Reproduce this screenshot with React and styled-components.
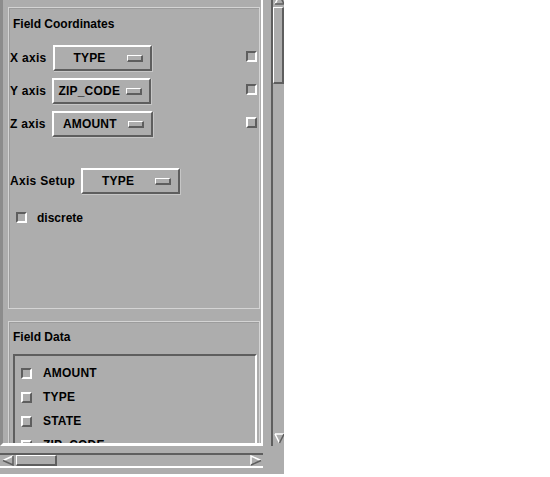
import React from "react";
import styled, { createGlobalStyle } from "styled-components";

const face = "#adadad";
const light = "#ffffff";
const dark = "#5e5e5e";

const GlobalStyle = createGlobalStyle`
  html, body {
    margin: 0;
    background: #fff;
  }
`;

const Window = styled.div`
  width: 284px;
  height: 474px;
  background: ${face};
  display: grid;
  grid-template-columns: 263px 8px 13px;
  grid-template-rows: 446px 28px;
  font: bold 12px "Liberation Sans", Arial, sans-serif;
  color: #000;
`;

const Clip = styled.div`
  grid-column: 1;
  grid-row: 1;
  overflow: hidden;
  box-sizing: border-box;
  border-left: 3px solid #8c8c8c;
  border-right: 2px solid ${light};
  border-bottom: 3px solid ${light};
  padding: 7px 1px 0 5px;
`;

const Frame = styled.div`
  box-sizing: border-box;
  height: ${p => p.$height || "auto"};
  border: 1px solid #d4d4d4;
  box-shadow: inset 1px 1px 0 #9c9c9c;
  padding-top: ${p => p.$padTop || 8}px;
  margin-bottom: 12px;
  display: flex;
  flex-direction: column;
`;

const Title = styled.div`
  line-height: 14px;
  padding-left: 4px;
  margin-top: 1px;
`;

const Rows = styled.div`
  display: flex;
  flex-direction: column;
  gap: 7px;
  margin-top: ${p => p.$top}px;
  padding: 0 2px 0 1px;
`;

const Row = styled.div`
  display: flex;
  align-items: center;
  height: 26px;
`;

const Label = styled.span`
  margin-right: 6px;
  letter-spacing: 0.3px;
  white-space: nowrap;
`;

const Spacer = styled.div`
  flex: 1;
`;

const OptionButton = styled.div`
  box-sizing: border-box;
  width: ${p => p.$width || 99}px;
  height: 26px;
  border: 2px solid;
  border-color: ${light} ${dark} ${dark} ${light};
  box-shadow: 1px 1px 0 #c6c6c6;
  display: flex;
  align-items: center;
  padding: 0 7px 0 2px;
`;

const OptionText = styled.span`
  flex: 1;
  text-align: center;
  letter-spacing: 0.2px;
  white-space: nowrap;
`;

const Indicator = styled.span`
  box-sizing: border-box;
  width: 16px;
  height: 7px;
  margin-left: 4px;
  border: 1px solid;
  border-color: ${light} ${dark} ${dark} ${light};
  border-width: 1px 2px 2px 1px;
`;

const Check = styled.span`
  box-sizing: border-box;
  flex: none;
  width: 11px;
  height: 11px;
  margin-top: ${p => p.$lift ? -3 : 0}px;
  border: 2px solid;
  border-color: ${p => (p.$raised ? `${light} ${dark} ${dark} ${light}` : `${dark} ${light} ${light} ${dark}`)};
`;

const Toggle = styled.div`
  display: flex;
  align-items: center;
  gap: 10px;
  height: ${p => p.$height || 14}px;
  padding-left: ${p => p.$indent || 0}px;
`;

const ListBox = styled.div`
  margin: 10px 2px 0 4px;
  border: 2px solid;
  border-color: ${dark} ${light} ${light} ${dark};
  padding: 5px 0 0 6px;
  height: 140px;
`;

const ListRow = styled(Toggle)`
  height: 24px;
  gap: 11px;
  letter-spacing: 0.2px;
`;

const VScroll = styled.div`
  grid-column: 3;
  grid-row: 1;
  box-sizing: border-box;
  border-left: 2px solid ${dark};
  display: flex;
  flex-direction: column;
  overflow: hidden;
`;

const Thumb = styled.div`
  box-sizing: border-box;
  border: 2px solid;
  border-color: ${light} ${dark} ${dark} ${light};
  border-width: 1px 2px 2px 1px;
  width: ${p => p.$w || "auto"};
  height: ${p => p.$h || "auto"};
  margin-left: ${p => p.$gap || 0}px;
  flex: none;
`;

const HScroll = styled.div`
  grid-column: 1;
  grid-row: 2;
  margin-top: 7px;
  height: 15px;
  box-sizing: border-box;
  border-top: 2px solid ${dark};
  border-bottom: 2px solid ${light};
  display: flex;
  align-items: center;
  padding: 0 1px 0 2px;
`;

const Arrow = ({ dir }) => {
  const shapes = {
    up: { pts: "5.5,1 10,10 1,10", lit: "M1 10 L5.5 1", shade: "M5.5 1 L10 10 L1 10" },
    down: { pts: "1,1 10,1 5.5,10", lit: "M1 1 L10 1 M1 1 L5.5 10", shade: "M10 1 L5.5 10" },
    left: { pts: "1,5.5 11,1 11,10", lit: "M1 5.5 L11 1", shade: "M11 1 L11 10 L1 5.5" },
    right: { pts: "1,1 11,5.5 1,10", lit: "M1 10 L1 1 L11 5.5", shade: "M11 5.5 L1 10" },
  };
  const s = shapes[dir];
  const wide = dir === "left" || dir === "right";
  return (
    <svg width={wide ? 12 : 11} height={11} style={{ flex: "none", display: "block" }}>
      <polygon points={s.pts} fill={face} />
      <path d={s.lit} stroke={light} strokeWidth="1.5" fill="none" />
      <path d={s.shade} stroke={dark} strokeWidth="1.5" fill="none" />
    </svg>
  );
};

const UpArrowSlot = styled.div`
  margin: -6px 0 2px 1px;
`;

const DownArrowSlot = styled.div`
  margin: 0 0 2px 1px;
`;

const axes = [
  { label: "X axis", value: "TYPE", raised: false },
  { label: "Y axis", value: "ZIP_CODE", raised: false },
  { label: "Z axis", value: "AMOUNT", raised: true, width: 101 },
];

const fields = [
  { name: "AMOUNT", raised: false },
  { name: "TYPE", raised: true },
  { name: "STATE", raised: true },
  { name: "ZIP_CODE", raised: true },
  { name: "ZONE", raised: true },
];

const Option = ({ value, width }) => (
  <OptionButton $width={width}>
    <OptionText>{value}</OptionText>
    <Indicator />
  </OptionButton>
);

export default function App() {
  return (
    <>
      <GlobalStyle />
      <Window>
        <Clip>
          <Frame $height="302px">
            <Title>Field Coordinates</Title>
            <Rows $top={14}>
              {axes.map(a => (
                <Row key={a.label}>
                  <Label>{a.label}</Label>
                  <Option value={a.value} width={a.width} />
                  <Spacer />
                  <Check $raised={a.raised} $lift />
                </Row>
              ))}
            </Rows>
            <Rows $top={31}>
              <Row>
                <Label>Axis Setup</Label>
                <Option value="TYPE" />
              </Row>
            </Rows>
            <Rows $top={11}>
              <Toggle $height={25} $indent={6}>
                <Check />
                <span>discrete</span>
              </Toggle>
            </Rows>
          </Frame>
          <Frame $padTop={7}>
            <Title>Field Data</Title>
            <ListBox>
              {fields.map(f => (
                <ListRow key={f.name}>
                  <Check $raised={f.raised} />
                  <span>{f.name}</span>
                </ListRow>
              ))}
            </ListBox>
          </Frame>
        </Clip>
        <VScroll>
          <UpArrowSlot>
            <Arrow dir="up" />
          </UpArrowSlot>
          <Thumb $h="77px" />
          <Spacer />
          <DownArrowSlot>
            <Arrow dir="down" />
          </DownArrowSlot>
        </VScroll>
        <HScroll>
          <Arrow dir="left" />
          <Thumb $w="41px" $h="11px" $gap={2} />
          <Spacer />
          <Arrow dir="right" />
        </HScroll>
      </Window>
    </>
  );
}
